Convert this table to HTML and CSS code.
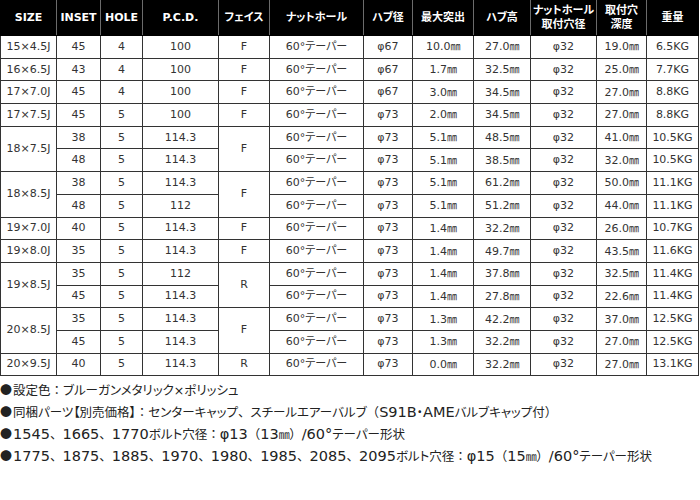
FILE: index.html
```html
<!DOCTYPE html>
<html lang="ja">
<head>
<meta charset="utf-8">
<link rel="stylesheet" href="styles.css">
</head>
<body>
<table class="spec">
<colgroup>
<col style="width:56px"><col style="width:44px"><col style="width:42px"><col style="width:76px"><col style="width:51px"><col style="width:94px"><col style="width:49px"><col style="width:61px"><col style="width:57px"><col style="width:66px"><col style="width:50px"><col style="width:52px">
</colgroup>
<thead>
<tr><th>SIZE</th><th>INSET</th><th>HOLE</th><th>P.C.D.</th><th>フェイス</th><th>ナットホール</th><th>ハブ径</th><th>最大突出</th><th>ハブ高</th><th>ナットホール<br>取付穴径</th><th>取付穴<br>深度</th><th>重量</th></tr>
</thead>
<tbody>
<tr><td>15×4.5J</td><td>45</td><td>4</td><td>100</td><td>F</td><td>60°テーパー</td><td>φ67</td><td>10.0<span class="mm">㎜</span></td><td>27.0<span class="mm">㎜</span></td><td>φ32</td><td>19.0<span class="mm">㎜</span></td><td>6.5KG</td></tr>
<tr><td>16×6.5J</td><td>43</td><td>4</td><td>100</td><td>F</td><td>60°テーパー</td><td>φ67</td><td>1.7<span class="mm">㎜</span></td><td>32.5<span class="mm">㎜</span></td><td>φ32</td><td>25.0<span class="mm">㎜</span></td><td>7.7KG</td></tr>
<tr><td>17×7.0J</td><td>45</td><td>4</td><td>100</td><td>F</td><td>60°テーパー</td><td>φ67</td><td>3.0<span class="mm">㎜</span></td><td>34.5<span class="mm">㎜</span></td><td>φ32</td><td>27.0<span class="mm">㎜</span></td><td>8.8KG</td></tr>
<tr><td>17×7.5J</td><td>45</td><td>5</td><td>100</td><td>F</td><td>60°テーパー</td><td>φ73</td><td>2.0<span class="mm">㎜</span></td><td>34.5<span class="mm">㎜</span></td><td>φ32</td><td>27.0<span class="mm">㎜</span></td><td>8.8KG</td></tr>
<tr><td rowspan="2">18×7.5J</td><td>38</td><td>5</td><td>114.3</td><td rowspan="2">F</td><td>60°テーパー</td><td>φ73</td><td>5.1<span class="mm">㎜</span></td><td>48.5<span class="mm">㎜</span></td><td>φ32</td><td>41.0<span class="mm">㎜</span></td><td>10.5KG</td></tr>
<tr><td>48</td><td>5</td><td>114.3</td><td>60°テーパー</td><td>φ73</td><td>5.1<span class="mm">㎜</span></td><td>38.5<span class="mm">㎜</span></td><td>φ32</td><td>32.0<span class="mm">㎜</span></td><td>10.5KG</td></tr>
<tr><td rowspan="2">18×8.5J</td><td>38</td><td>5</td><td>114.3</td><td rowspan="2">F</td><td>60°テーパー</td><td>φ73</td><td>5.1<span class="mm">㎜</span></td><td>61.2<span class="mm">㎜</span></td><td>φ32</td><td>50.0<span class="mm">㎜</span></td><td>11.1KG</td></tr>
<tr><td>48</td><td>5</td><td>112</td><td>60°テーパー</td><td>φ73</td><td>5.1<span class="mm">㎜</span></td><td>51.2<span class="mm">㎜</span></td><td>φ32</td><td>44.0<span class="mm">㎜</span></td><td>11.1KG</td></tr>
<tr><td>19×7.0J</td><td>40</td><td>5</td><td>114.3</td><td>F</td><td>60°テーパー</td><td>φ73</td><td>1.4<span class="mm">㎜</span></td><td>32.2<span class="mm">㎜</span></td><td>φ32</td><td>26.0<span class="mm">㎜</span></td><td>10.7KG</td></tr>
<tr><td>19×8.0J</td><td>35</td><td>5</td><td>114.3</td><td>F</td><td>60°テーパー</td><td>φ73</td><td>1.4<span class="mm">㎜</span></td><td>49.7<span class="mm">㎜</span></td><td>φ32</td><td>43.5<span class="mm">㎜</span></td><td>11.6KG</td></tr>
<tr><td rowspan="2">19×8.5J</td><td>35</td><td>5</td><td>112</td><td rowspan="2">R</td><td>60°テーパー</td><td>φ73</td><td>1.4<span class="mm">㎜</span></td><td>37.8<span class="mm">㎜</span></td><td>φ32</td><td>32.5<span class="mm">㎜</span></td><td>11.4KG</td></tr>
<tr><td>45</td><td>5</td><td>114.3</td><td>60°テーパー</td><td>φ73</td><td>1.4<span class="mm">㎜</span></td><td>27.8<span class="mm">㎜</span></td><td>φ32</td><td>22.6<span class="mm">㎜</span></td><td>11.4KG</td></tr>
<tr><td rowspan="2">20×8.5J</td><td>35</td><td>5</td><td>114.3</td><td rowspan="2">F</td><td>60°テーパー</td><td>φ73</td><td>1.3<span class="mm">㎜</span></td><td>42.2<span class="mm">㎜</span></td><td>φ32</td><td>37.0<span class="mm">㎜</span></td><td>12.5KG</td></tr>
<tr><td>45</td><td>5</td><td>114.3</td><td>60°テーパー</td><td>φ73</td><td>1.3<span class="mm">㎜</span></td><td>32.2<span class="mm">㎜</span></td><td>φ32</td><td>27.0<span class="mm">㎜</span></td><td>12.5KG</td></tr>
<tr><td>20×9.5J</td><td>40</td><td>5</td><td>114.3</td><td>R</td><td>60°テーパー</td><td>φ73</td><td>0.0<span class="mm">㎜</span></td><td>32.2<span class="mm">㎜</span></td><td>φ32</td><td>27.0<span class="mm">㎜</span></td><td>13.1KG</td></tr>
</tbody>
</table>
<ul class="notes">
<li><span class="dot">●</span>設定色<span class="p">：</span>ブルーガンメタリック×ポリッシュ</li>
<li><span class="dot">●</span>同梱パーツ【別売価格】<span class="p">：</span>センターキャップ<span class="p">、</span>スチールエアーバルブ<span class="p">（</span><span class="n">S91B</span>・<span class="n">AME</span>バルブキャップ付<span class="p">）</span></li>
<li><span class="dot">●</span><span class="n">1545</span><span class="p">、</span><span class="n">1665</span><span class="p">、</span><span class="n">1770</span>ボルト穴径<span class="p">：</span><span class="n">φ13</span><span class="p">（</span><span class="n">13</span><span class="mm">㎜</span><span class="p">）</span><span class="n">/60°</span>テーパー形状</li>
<li><span class="dot">●</span><span class="n">1775</span><span class="p">、</span><span class="n">1875</span><span class="p">、</span><span class="n">1885</span><span class="p">、</span><span class="n">1970</span><span class="p">、</span><span class="n">1980</span><span class="p">、</span><span class="n">1985</span><span class="p">、</span><span class="n">2085</span><span class="p">、</span><span class="n">2095</span>ボルト穴径<span class="p">：</span><span class="n">φ15</span><span class="p">（</span><span class="n">15</span><span class="mm">㎜</span><span class="p">）</span><span class="n">/60°</span>テーパー形状</li>
</ul>
</body>
</html>
```
FILE: styles.css
```css
html, body {
  margin: 0;
  padding: 0;
  background: #fff;
}
body {
  font-family: "DejaVu Sans", "Noto Sans CJK JP", sans-serif;
  font-feature-settings: "palt";
  color: #333;
}
.spec {
  border-collapse: collapse;
  table-layout: fixed;
  width: 698px;
  font-size: 11px;
}
.spec th {
  background: #000;
  color: #fff;
  font-weight: bold;
  height: 34px;
  padding: 0;
  line-height: 14px;
  border: 1px solid #000;
  border-left: 1px solid #6b6b6b;
  border-right: 1px solid #6b6b6b;
  font-size: 11px;
}
.spec th:first-child { border-left-color: #000; }
.spec th:last-child { border-right-color: #000; }
.spec td {
  border: 1px solid #333;
  height: 21.7px;
  padding: 0;
  text-align: center;
  line-height: 14px;
  white-space: nowrap;
}
.mm {
  font-family: "Noto Sans CJK JP", sans-serif;
  font-size: 10px;
  letter-spacing: -0.5px;
}
.notes {
  list-style: none;
  margin: 3px 0 0;
  padding: 0;
  font-size: 12.5px;
  line-height: 21px;
  color: #222;
  white-space: nowrap;
}
.notes .dot {
  font-family: "Noto Sans CJK JP", sans-serif;
  font-size: 12px;
  margin-right: 1px;
}
.notes .p {
  font-feature-settings: normal;
}
.notes .n {
  font-size: 14.5px;
}
.notes .mm {
  font-size: 11px;
}
```
